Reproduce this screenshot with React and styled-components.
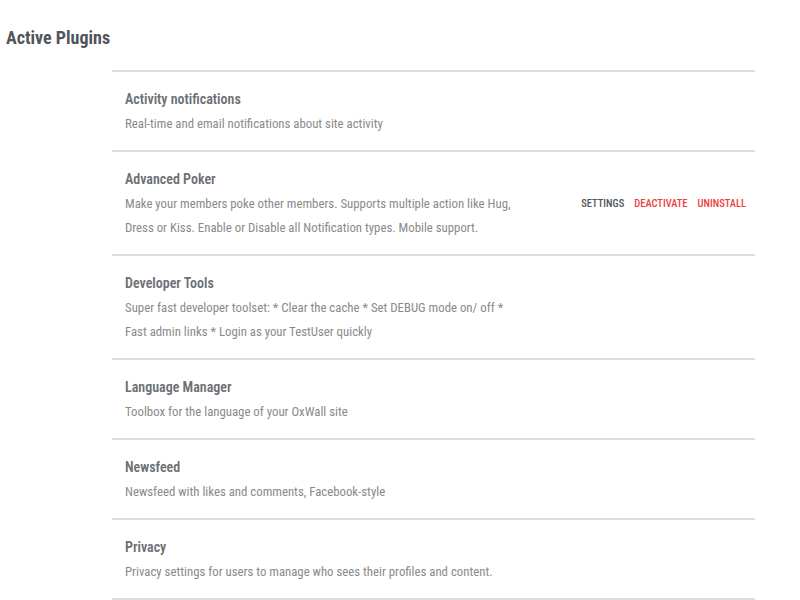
import styled, { createGlobalStyle } from "styled-components";

const GlobalStyle = createGlobalStyle`
  body {
    margin: 0;
    background: #fff;
    font-family: "Roboto Condensed", Roboto, "Liberation Sans", sans-serif;
    font-stretch: condensed;
  }
`;

const plugins = [
  {
    title: "Activity notifications",
    desc: "Real-time and email notifications about site activity",
  },
  {
    title: "Advanced Poker",
    desc: "Make your members poke other members. Supports multiple action like Hug, Dress or Kiss. Enable or Disable all Notification types. Mobile support.",
    actions: true,
  },
  {
    title: "Developer Tools",
    desc: "Super fast developer toolset: * Clear the cache * Set DEBUG mode on/ off * Fast admin links * Login as your TestUser quickly",
  },
  {
    title: "Language Manager",
    desc: "Toolbox for the language of your OxWall site",
  },
  {
    title: "Newsfeed",
    desc: "Newsfeed with likes and comments, Facebook-style",
  },
  {
    title: "Privacy",
    desc: "Privacy settings for users to manage who sees their profiles and content.",
  },
];

const Page = styled.div`
  padding: 27px 6px 0;
`;

const Heading = styled.h2`
  margin: 0;
  font-size: 18px;
  line-height: 22px;
  font-weight: 700;
  color: #50555b;
`;

const List = styled.ul`
  list-style: none;
  margin: 21px 0 0 106px;
  padding: 0;
  width: 643px;
  border-top: 2px solid #dcdcdc;
`;

const Row = styled.li`
  display: flex;
  align-items: center;
  justify-content: space-between;
  padding: 14px 9px 14px 13px;
  border-bottom: 2px solid #dcdcdc;
`;

const Info = styled.div`
  width: 395px;
`;

const Title = styled.div`
  font-size: 14px;
  line-height: 26px;
  font-weight: 600;
  color: #6d7075;
`;

const Desc = styled.div`
  font-size: 12.8px;
  line-height: 24px;
  color: #8a8a8a;
`;

const Actions = styled.div`
  display: flex;
  gap: 10px;
`;

const Action = styled.a`
  font-size: 10.5px;
  font-weight: 500;
  text-transform: uppercase;
  text-decoration: none;
  color: ${(p) => (p.$danger ? "#ec3d41" : "#50545a")};
  cursor: pointer;
`;

export default function App() {
  return (
    <Page>
      <GlobalStyle />
      <Heading>Active Plugins</Heading>
      <List>
        {plugins.map((p) => (
          <Row key={p.title}>
            <Info>
              <Title>{p.title}</Title>
              <Desc>{p.desc}</Desc>
            </Info>
            {p.actions && (
              <Actions>
                <Action>Settings</Action>
                <Action $danger>Deactivate</Action>
                <Action $danger>Uninstall</Action>
              </Actions>
            )}
          </Row>
        ))}
      </List>
    </Page>
  );
}
